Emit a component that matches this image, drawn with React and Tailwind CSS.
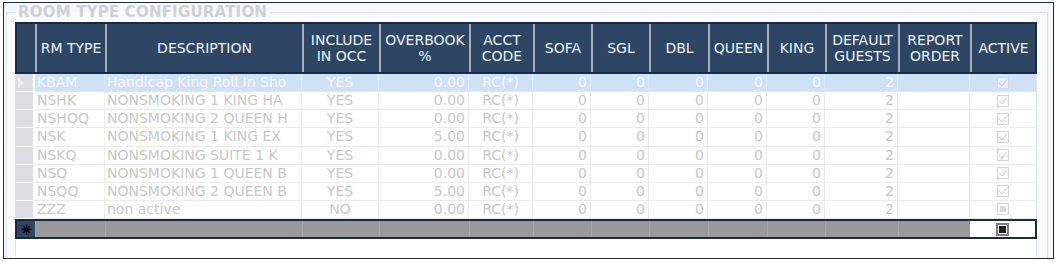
import React from "react";

const headerCols = [
  { w: "w-[70px]", l: ["RM TYPE"] },
  { w: "w-[197px]", l: ["DESCRIPTION"] },
  { w: "w-[77px]", l: ["INCLUDE", "IN OCC"] },
  { w: "w-[90px]", l: ["OVERBOOK", "%"] },
  { w: "w-[64px]", l: ["ACCT", "CODE"] },
  { w: "w-[58px]", l: ["SOFA"] },
  { w: "w-[58px]", l: ["SGL"] },
  { w: "w-[59px]", l: ["DBL"] },
  { w: "w-[59px]", l: ["QUEEN"] },
  { w: "w-[58px]", l: ["KING"] },
  { w: "w-[73px]", l: ["DEFAULT", "GUESTS"] },
  { w: "w-[72px]", l: ["REPORT", "ORDER"] },
  { w: "w-[65px]", l: ["ACTIVE"] },
];

const dataCols = [
  { w: "w-[70px]", a: "text-left pl-[2px]" },
  { w: "w-[197px]", a: "text-left pl-[2px]" },
  { w: "w-[77px]", a: "text-center" },
  { w: "w-[90px]", a: "text-right pr-[3px]" },
  { w: "w-[64px]", a: "text-center" },
  { w: "w-[58px]", a: "text-right pr-[3px]" },
  { w: "w-[58px]", a: "text-right pr-[3px]" },
  { w: "w-[59px]", a: "text-right pr-[3px]" },
  { w: "w-[59px]", a: "text-right pr-[3px]" },
  { w: "w-[58px]", a: "text-right pr-[3px]" },
  { w: "w-[73px]", a: "text-right pr-[3px]" },
  { w: "w-[72px]", a: "text-right pr-[3px]" },
];

const rows = [
  ["KBAM", "Handicap King Roll In Sho", "YES", "0.00", "RC(*)", "0", "0", "0", "0", "0", "2", "", "check"],
  ["NSHK", "NONSMOKING 1 KING HA", "YES", "0.00", "RC(*)", "0", "0", "0", "0", "0", "2", "", "check"],
  ["NSHQQ", "NONSMOKING 2 QUEEN H", "YES", "0.00", "RC(*)", "0", "0", "0", "0", "0", "2", "", "check"],
  ["NSK", "NONSMOKING 1 KING EX", "YES", "5.00", "RC(*)", "0", "0", "0", "0", "0", "2", "", "check"],
  ["NSKQ", "NONSMOKING SUITE 1 K", "YES", "0.00", "RC(*)", "0", "0", "0", "0", "0", "2", "", "check"],
  ["NSQ", "NONSMOKING 1 QUEEN B", "YES", "0.00", "RC(*)", "0", "0", "0", "0", "0", "2", "", "check"],
  ["NSQQ", "NONSMOKING 2 QUEEN B", "YES", "5.00", "RC(*)", "0", "0", "0", "0", "0", "2", "", "check"],
  ["ZZZ", "non active", "NO", "0.00", "RC(*)", "0", "0", "0", "0", "0", "2", "", "ind"],
];

function CheckBox({ kind, selected }) {
  return (
    <div
      className={`w-[12px] h-[12px] border border-[#d6d6d6] flex items-center justify-center ${
        selected ? "bg-[#e4eefa]" : "bg-white"
      }`}
    >
      {kind === "check" ? (
        <svg width="10" height="10" viewBox="0 0 10 10">
          <path d="M1 5 L4 8 L9 1.5" fill="none" stroke="#cdcdcd" strokeWidth="1" />
        </svg>
      ) : (
        <div className="w-[6px] h-[6px] bg-[#d9d9d9]" />
      )}
    </div>
  );
}

export default function App() {
  return (
    <div
      className="w-[1058px] h-[263px] bg-white pl-[3px] pt-[2px]"
      style={{ fontFamily: '"DejaVu Sans", Verdana, sans-serif' }}
    >
      <div className="w-[1051px] h-[257px] border border-[#1d2b45] bg-[#f4f7fb] pl-[2px] pr-[5px] flex flex-col">
        <fieldset className="border border-b-0 border-[#dce2ea] flex-1 pl-[8px] pt-[1px] bg-[#f9fbfd] min-h-0">
          <legend className="ml-[1px] px-[2px] text-[15px] leading-[18px] font-bold text-[#cdd1d6] tracking-[0.2px]">
            ROOM TYPE CONFIGURATION
          </legend>
          <div className="w-[1022px] h-[235px] flex flex-col">
            {/* header */}
            <div className="h-[52px] shrink-0 border-2 border-[#1a2a44] bg-[#2c4664] flex text-[#eef2f6] text-[14px] leading-[16px]">
              <div className="w-[18px] shrink-0" />
              {headerCols.map((c, i) => (
                <div
                  key={i}
                  className={`${c.w} shrink-0 border-l-2 border-[#a7afb9] flex flex-col items-center justify-center text-center`}
                >
                  {c.l.map((t, j) => (
                    <span key={j} className="whitespace-nowrap">
                      {t}
                    </span>
                  ))}
                </div>
              ))}
            </div>
            {/* data rows */}
            <div className="border-x border-[#e1e5ea] bg-white shrink-0">
              {rows.map((r, ri) => {
                const sel = ri === 0;
                return (
                  <div
                    key={ri}
                    className={`flex h-[18.125px] text-[14px] leading-[17px] ${
                      sel ? "text-[#f4f8fd]" : "text-[#c8c8c8]"
                    }`}
                  >
                    <div className="w-[19px] shrink-0 border-b border-white pr-[2px]">
                      <div className="w-full h-full bg-[#dadde1] flex items-center pl-[2px]">
                        {sel && (
                          <svg width="6" height="10" viewBox="0 0 6 10">
                            <polygon points="0,0 6,5 0,10" fill="#eeeeee" />
                          </svg>
                        )}
                      </div>
                    </div>
                    {dataCols.map((c, ci) => (
                      <div
                        key={ci}
                        className={`${c.w} shrink-0 border-r border-b overflow-hidden whitespace-nowrap ${c.a} ${
                          sel ? "bg-[#cee1f5] border-[#dce9f6]" : "border-[#ececec]"
                        }`}
                      >
                        {r[ci]}
                      </div>
                    ))}
                    <div
                      className={`w-[66px] shrink-0 border-b flex items-center justify-center ${
                        sel ? "bg-[#cee1f5] border-[#dce9f6]" : "border-[#ececec]"
                      }`}
                    >
                      <CheckBox kind={r[12]} selected={sel} />
                    </div>
                  </div>
                );
              })}
            </div>
            {/* new row */}
            <div className="h-[20px] shrink-0 border-2 border-[#1a2a44] flex bg-[#999999]">
              <div className="w-[18px] shrink-0 bg-[#2c4664] flex items-center justify-center">
                <svg width="11" height="11" viewBox="0 0 11 11">
                  <g stroke="#000" strokeWidth="1.4" strokeLinecap="round">
                    <line x1="5.5" y1="1" x2="5.5" y2="10" />
                    <line x1="1" y1="5.5" x2="10" y2="5.5" />
                    <line x1="2.3" y1="2.3" x2="8.7" y2="8.7" />
                    <line x1="8.7" y1="2.3" x2="2.3" y2="8.7" />
                  </g>
                </svg>
              </div>
              {dataCols.map((c, ci) => (
                <div key={ci} className={`${c.w} shrink-0 border-l border-[#a6a6a6]`} />
              ))}
              <div className="w-[65px] shrink-0 bg-white flex items-center justify-center">
                <div className="w-[13px] h-[13px] border-2 border-[#7c7c7c] bg-white p-[1px]">
                  <div className="w-full h-full bg-[#1e1e1e]" />
                </div>
              </div>
            </div>
            <div className="flex-1 border-x border-[#e1e5ea] bg-white" />
          </div>
        </fieldset>
      </div>
    </div>
  );
}
